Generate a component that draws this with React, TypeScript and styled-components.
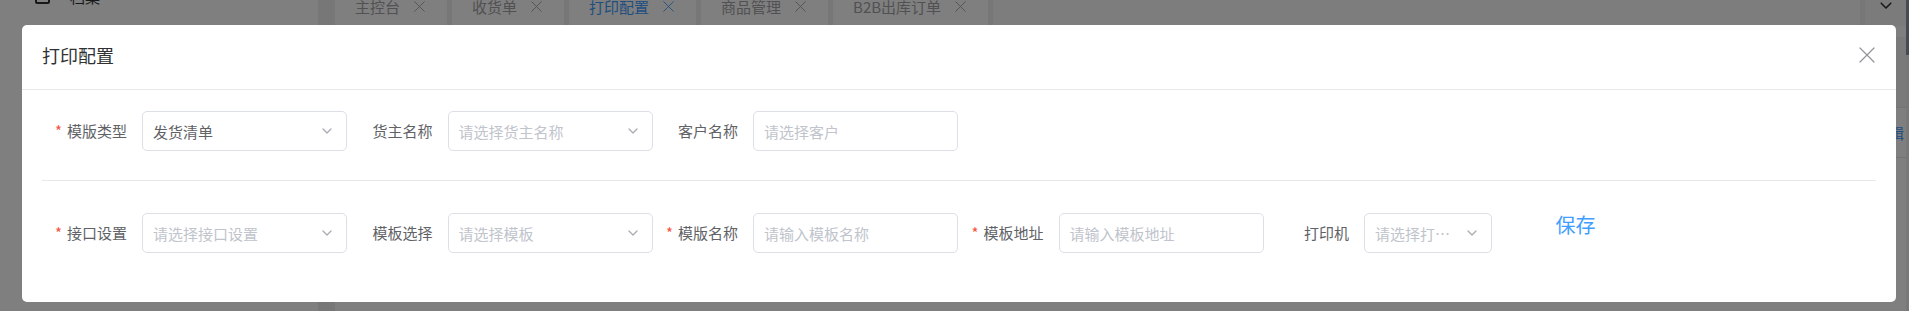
import React from "react"
import styled, { createGlobalStyle } from "styled-components"

const GlobalStyle = createGlobalStyle`
  html, body {
    margin: 0;
    padding: 0;
  }
  body {
    width: 1909px;
    height: 311px;
    overflow: hidden;
    background: #fff;
    font-family: "Noto Sans CJK SC", "Noto Sans", sans-serif;
  }
  * {
    box-sizing: border-box;
  }
`

const Page = styled.div`
  position: relative;
  display: flex;
  width: 1909px;
  height: 311px;
  overflow: hidden;
`

const Sidebar = styled.aside`
  width: 318px;
  flex-shrink: 0;
  background: #fff;
`

const SideItem = styled.div`
  height: 50px;
  margin-top: -29px;
  display: flex;
  align-items: center;
  gap: 20px;
  padding-left: 35px;
  font-size: 15px;
  color: #303133;
`

const Gutter = styled.div`
  width: 17px;
  flex-shrink: 0;
  background: #eeeeee;
`

const Main = styled.main`
  flex: 1;
  min-width: 0;
  display: flex;
  flex-direction: column;
  background: #fff;
`

const TabBar = styled.div`
  height: 40px;
  margin-top: -14px;
  display: flex;
  gap: 5px;
  background: #efefef;
`

const Tab = styled.div<{ $active?: boolean }>`
  display: flex;
  align-items: center;
  gap: 14px;
  padding: 0 22px 0 20px;
  background: #fff;
  font-size: 15px;
  color: ${p => (p.$active ? "#409eff" : "#a2a2a6")};
  white-space: nowrap;
`

const TabSpacer = styled.div`
  flex: 1;
  background: #fafafa;
`

const TabMore = styled.div`
  width: 41px;
  display: flex;
  align-items: center;
  justify-content: center;
  background: #f7f7f7;
  color: #303133;
`

const Content = styled.div`
  flex: 1;
  margin-top: 11px;
  display: flex;
  flex-direction: column;
`

const Toolbar = styled.div`
  height: 71px;
  background: #f4f4f4;
  border-bottom: 1px solid #e6e6e6;
`

const ListRow = styled.div`
  height: 50px;
  display: flex;
  align-items: center;
  justify-content: flex-end;
  padding-right: 2px;
  font-size: 15px;
  color: #409eff;
  border-bottom: 1px solid #e6e6e6;
  background: #fff;
`

const ScrollTrack = styled.div`
  width: 3px;
  flex-shrink: 0;
  background: #f0f0f0;
`

const ScrollThumb = styled.div`
  height: 55px;
  background: #8e94a4;
`

const Mask = styled.div`
  position: absolute;
  inset: 0;
  background: rgba(0, 0, 0, 0.5);
  z-index: 1;
`

const Dialog = styled.div`
  position: absolute;
  left: 22px;
  top: 25px;
  width: 1874px;
  height: 277px;
  z-index: 2;
  display: flex;
  flex-direction: column;
  background: #fff;
  border-radius: 5px;
`

const DialogHeader = styled.header`
  height: 65px;
  display: flex;
  justify-content: space-between;
  align-items: flex-start;
  padding: 18px 21px 0 20px;
  border-bottom: 1px solid #e8e8e8;
`

const DialogTitle = styled.h2`
  margin: 0;
  font-size: 18px;
  line-height: 24px;
  font-weight: normal;
  color: #303133;
`

const CloseButton = styled.button`
  width: 16px;
  height: 16px;
  margin-top: 4px;
  padding: 0;
  border: 0;
  background: none;
  color: #909399;
  display: flex;
`

const DialogBody = styled.div`
  padding: 0 20px;
`

const FormRow = styled.div<{ $top: number; $bottom: number }>`
  display: flex;
  align-items: flex-start;
  padding: ${p => p.$top}px 0 ${p => p.$bottom}px 12px;
`

const Divider = styled.div`
  height: 1px;
  background: #e8e8e8;
`

const FormItem = styled.div`
  display: flex;
  margin-right: 12.5px;
`

const Label = styled.label`
  width: 88px;
  padding-right: 15px;
  text-align: right;
  line-height: 40px;
  font-size: 15px;
  color: #606266;
  white-space: nowrap;
`

const Star = styled.span`
  color: #f5533d;
  margin-right: 5px;
`

const Field = styled.div<{ $width: number; $select?: boolean }>`
  width: ${p => p.$width}px;
  height: 40px;
  display: flex;
  align-items: center;
  gap: 8px;
  padding: 0 ${p => (p.$select ? 14 : 10)}px 0 10px;
  border: 1px solid #dcdfe6;
  border-radius: 5px;
  background: #fff;
  font-size: 15px;
`

const FieldText = styled.span<{ $placeholder?: boolean }>`
  flex: 1;
  min-width: 0;
  overflow: hidden;
  white-space: nowrap;
  text-overflow: ellipsis;
  color: ${p => (p.$placeholder ? "#c0c4cc" : "#606266")};
`

const SaveButton = styled.button`
  margin: 2px 0 0 51px;
  padding: 0;
  border: 0;
  background: none;
  font-family: inherit;
  font-size: 20px;
  line-height: 20px;
  color: #409eff;
  cursor: pointer;
`

const Chevron = ({ size = 10, color = "#a8abb2" }: { size?: number; color?: string }) => (
  <svg width={size} height={size * 0.6} viewBox="0 0 10 6" fill="none">
    <path d="M1 1l4 4 4-4" stroke={color} strokeWidth="1.3" strokeLinecap="round" strokeLinejoin="round" />
  </svg>
)

const Cross = ({ size, color, width = 1.2 }: { size: number; color: string; width?: number }) => (
  <svg width={size} height={size} viewBox="0 0 16 16" fill="none">
    <path d="M1 1l14 14M15 1L1 15" stroke={color} strokeWidth={width} strokeLinecap="round" />
  </svg>
)

const tabs = [
  { id: 1, title: "主控台" },
  { id: 2, title: "收货单" },
  { id: 3, title: "打印配置", active: true },
  { id: 4, title: "商品管理" },
  { id: 5, title: "B2B出库订单" },
]

type Item = {
  label: string
  required?: boolean
  value?: string
  placeholder?: string
  select?: boolean
  width?: number
}

const firstRow: Item[] = [
  { label: "模版类型", required: true, value: "发货清单", select: true },
  { label: "货主名称", placeholder: "请选择货主名称", select: true },
  { label: "客户名称", placeholder: "请选择客户" },
]

const secondRow: Item[] = [
  { label: "接口设置", required: true, placeholder: "请选择接口设置", select: true },
  { label: "模板选择", placeholder: "请选择模板", select: true },
  { label: "模版名称", required: true, placeholder: "请输入模板名称" },
  { label: "模板地址", required: true, placeholder: "请输入模板地址" },
  { label: "打印机", placeholder: "请选择打印机", select: true, width: 128 },
]

const renderItem = (item: Item) => (
  <FormItem key={item.label}>
    <Label>
      {item.required && <Star>*</Star>}
      {item.label}
    </Label>
    <Field $width={item.width || 205} $select={item.select}>
      <FieldText $placeholder={!item.value}>{item.value || item.placeholder}</FieldText>
      {item.select && <Chevron />}
    </Field>
  </FormItem>
)

export default function App() {
  return (
    <Page>
      <GlobalStyle />
      <Sidebar>
        <SideItem>
          <svg width="15" height="15" viewBox="0 0 15 15" fill="none">
            <rect x="1" y="1" width="13" height="13" rx="1" stroke="#303133" strokeWidth="2" />
          </svg>
          档案
        </SideItem>
      </Sidebar>
      <Gutter />
      <Main>
        <TabBar>
          {tabs.map(tab => (
            <Tab key={tab.id} $active={tab.active}>
              {tab.title}
              <Cross size={11} color={tab.active ? "#409eff" : "#a2a2a6"} width={1.3} />
            </Tab>
          ))}
          <TabSpacer />
          <TabMore>
            <Chevron size={12} color="#303133" />
          </TabMore>
        </TabBar>
        <Content>
          <Toolbar />
          <ListRow>编辑</ListRow>
        </Content>
      </Main>
      <ScrollTrack>
        <ScrollThumb />
      </ScrollTrack>

      <Mask />
      <Dialog>
        <DialogHeader>
          <DialogTitle>打印配置</DialogTitle>
          <CloseButton aria-label="关闭">
            <Cross size={16} color="#909399" />
          </CloseButton>
        </DialogHeader>
        <DialogBody>
          <FormRow $top={21} $bottom={29}>
            {firstRow.map(renderItem)}
          </FormRow>
          <Divider />
          <FormRow $top={32} $bottom={20}>
            {secondRow.map(renderItem)}
            <SaveButton>保存</SaveButton>
          </FormRow>
        </DialogBody>
      </Dialog>
    </Page>
  )
}
